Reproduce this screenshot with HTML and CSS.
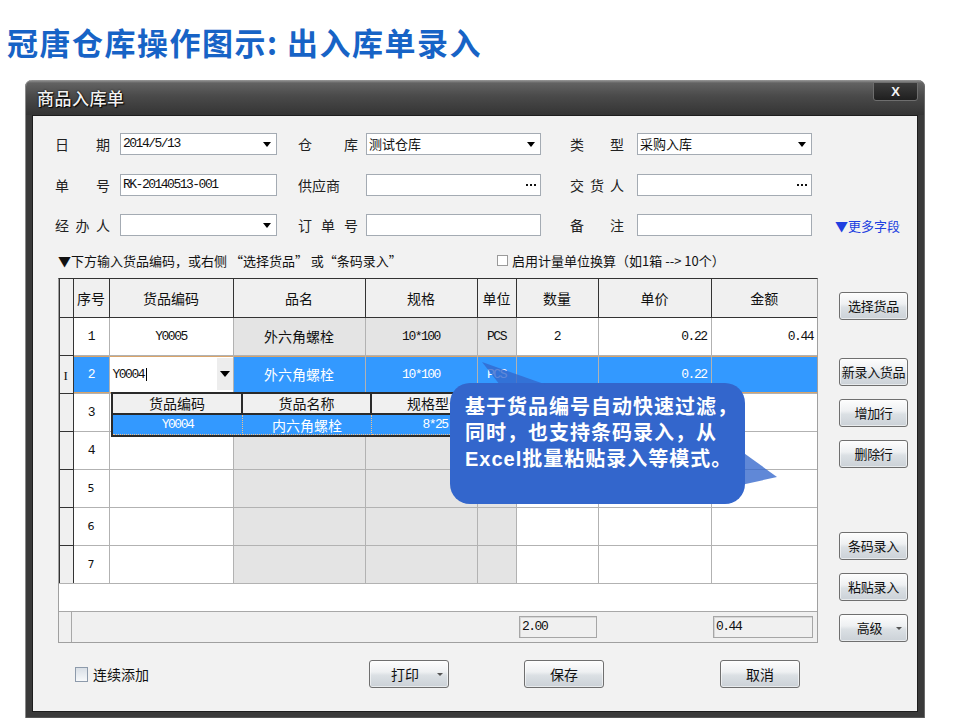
FILE: index.html
```html
<!DOCTYPE html>
<html lang="zh-CN">
<head>
<meta charset="utf-8">
<title>冠唐仓库操作图示: 出入库单录入</title>
<link rel="stylesheet" href="styles.css">
</head>
<body>
<h1 class="page-title">冠唐仓库操作图示: 出入库单录入</h1>
<div class="window">
  <div class="titlebar">
    <span class="win-title">商品入库单</span>
    <span class="close-btn">X</span>
  </div>
  <div class="client">
    <div class="form">
      <div class="lbl c1"><span>日</span><span>期</span></div>
      <div class="field"><span class="val mono">2014/5/13</span><i class="arrow"></i></div>
      <div class="lbl c3"><span>仓</span><span>库</span></div>
      <div class="field"><span class="val">测试仓库</span><i class="arrow"></i></div>
      <div class="lbl c5"><span>类</span><span>型</span></div>
      <div class="field"><span class="val">采购入库</span><i class="arrow"></i></div>
      <div></div>

      <div class="lbl c1"><span>单</span><span>号</span></div>
      <div class="field"><span class="val mono">RK-20140513-001</span></div>
      <div class="lbl c3 packed"><span>供应商</span></div>
      <div class="field"><span class="val"></span><i class="dots"></i></div>
      <div class="lbl c5"><span>交</span><span>货</span><span>人</span></div>
      <div class="field"><span class="val"></span><i class="dots"></i></div>
      <div></div>

      <div class="lbl c1"><span>经</span><span>办</span><span>人</span></div>
      <div class="field"><span class="val"></span><i class="arrow"></i></div>
      <div class="lbl c3"><span>订</span><span>单</span><span>号</span></div>
      <div class="field"><span class="val"></span></div>
      <div class="lbl c5"><span>备</span><span>注</span></div>
      <div class="field"><span class="val"></span></div>
      <div class="more">▼更多字段</div>
    </div>

    <div class="hint">
      <div class="hint-left">▼下方输入货品编码，或右侧 “选择货品” 或“条码录入”</div>
      <div class="hint-right"><i class="chk-small"></i>启用计量单位换算（如1箱 --&gt; 10个）</div>
    </div>

    <div class="main">
      <div class="table-wrap">
        <table class="grid">
          <colgroup>
            <col style="width:14px"><col style="width:36px"><col style="width:124px"><col style="width:132px"><col style="width:112px"><col style="width:39px"><col style="width:82px"><col style="width:113px"><col style="width:106px">
          </colgroup>
          <thead>
            <tr><th class="rh"></th><th>序号</th><th>货品编码</th><th>品名</th><th>规格</th><th>单位</th><th>数量</th><th>单价</th><th>金额</th></tr>
          </thead>
          <tbody>
            <tr><td class="rh"></td><td class="mono">1</td><td class="mono">Y0005</td><td class="g">外六角螺栓</td><td class="g mono">10*100</td><td class="g mono">PCS</td><td class="mono">2</td><td class="mono r">0.22</td><td class="mono r">0.44</td></tr>
            <tr class="sel"><td class="rh"><span class="ibeam">I</span></td><td class="mono">2</td><td class="edit"><div class="editor"><span class="mono">Y0004</span><span class="caret"></span><span class="dd-btn"><i class="arrow"></i></span></div></td><td>外六角螺栓</td><td class="mono">10*100</td><td class="mono">PCS</td><td></td><td class="mono r">0.22</td><td></td></tr>
            <tr><td class="rh"></td><td class="mono">3</td><td></td><td class="g"></td><td class="g"></td><td class="g"></td><td></td><td></td><td></td></tr>
            <tr><td class="rh"></td><td class="mono">4</td><td></td><td class="g"></td><td class="g"></td><td class="g"></td><td></td><td></td><td></td></tr>
            <tr><td class="rh"></td><td class="num">5</td><td></td><td class="g"></td><td class="g"></td><td class="g"></td><td></td><td></td><td></td></tr>
            <tr><td class="rh"></td><td class="num">6</td><td></td><td class="g"></td><td class="g"></td><td class="g"></td><td></td><td></td><td></td></tr>
            <tr><td class="rh"></td><td class="num">7</td><td></td><td class="g"></td><td class="g"></td><td class="g"></td><td></td><td></td><td></td></tr>
          </tbody>
        </table>
        <div class="blank"></div>
        <div class="footer">
          <div class="f-rh"></div>
          <div class="sum s-qty mono">2.00</div>
          <div class="sum s-amt mono">0.44</div>
        </div>

        <div class="dropdown">
          <div class="dd-head">货品编码</div>
          <div class="dd-head">货品名称</div>
          <div class="dd-head last">规格型号</div>
          <div class="dd-cell mono">Y0004</div>
          <div class="dd-cell">内六角螺栓</div>
          <div class="dd-cell mono last">8*25</div>
        </div>

        <div class="callout">基于货品编号自动快速过滤，<br>同时，也支持条码录入，从<br>Excel批量粘贴录入等模式。</div>
        <svg class="tails" width="758" height="363" viewBox="0 0 758 363">
          <polygon points="423,83 441,106 488,106"/>
          <polygon points="682,172 718,198 682,206"/>
        </svg>
      </div>

      <div class="side">
        <div class="btn sb-first">选择货品</div>
        <div class="btn sb-gap1">新录入货品</div>
        <div class="btn sb-next">增加行</div>
        <div class="btn sb-next">删除行</div>
        <div class="btn sb-gap2">条码录入</div>
        <div class="btn sb-next">粘贴录入</div>
        <div class="btn sb-next drop">高级<i class="mini-arrow"></i></div>
      </div>
    </div>

    <div class="bottom">
      <div class="chk-wrap"><i class="chk-big"></i><span>连续添加</span></div>
      <div class="btn bb drop">打印<i class="mini-arrow"></i></div>
      <div class="btn bb b-save">保存</div>
      <div class="btn bb b-cancel">取消</div>
    </div>
  </div>
</div>
</body>
</html>
```

FILE: styles.css
```css
* { box-sizing: border-box; }
html, body { margin: 0; padding: 0; background: #fff; }
body {
  width: 960px;
  height: 720px;
  overflow: hidden;
  font-family: "Noto Sans CJK SC", "Liberation Sans", sans-serif;
  color: #1a1a1a;
}

.page-title {
  margin: 0;
  padding: 22px 0 0 7px;
  height: 62px;
  font-size: 31px;
  line-height: 40px;
  font-weight: 700;
  color: #1763c6;
  letter-spacing: 1.5px;
  white-space: nowrap;
}

.window {
  width: 900px;
  height: 638px;
  margin: 18px 0 0 25px;
  padding: 0 7px 6px;
  border-radius: 7px 7px 0 0;
  background: linear-gradient(to bottom, #9a9a9a 0, #626262 3px, #4a4a4a 16px, #343434 35px, #3a3a3a 35px, #3a3a3a 100%);
  box-shadow: inset 1px 0 0 #8a8a8a, inset -1px 0 0 #6a6a6a, inset 0 -1px 0 #555;
  display: flex;
  flex-direction: column;
}

.titlebar {
  height: 35px;
  flex: none;
  display: flex;
  align-items: center;
  justify-content: space-between;
  padding-left: 5px;
}
.win-title {
  font-size: 17px;
  font-weight: 500;
  color: #f2f2f2;
  letter-spacing: 0.5px;
  text-shadow: 1px 1px 1px #000, 0 0 2px #000;
}
.close-btn {
  align-self: flex-start;
  margin-top: 2px;
  width: 45px;
  height: 19px;
  border: 1px solid #6e6e6e;
  border-radius: 0 0 3px 3px;
  background: linear-gradient(#3c3c3c, #1f1f1f);
  color: #f4f4f4;
  font: 700 13px/17px "Liberation Sans", sans-serif;
  text-align: center;
}

.client {
  height: 597px;
  flex: none;
  background: #f2f2f2;
  border: 1px solid #1e1e1e;
}

/* ---------- form ---------- */
.form {
  display: grid;
  padding: 17px 0 0 22px;
  grid-template-columns: 65px 157px 89px 175px 96px 175px 1fr;
  grid-template-rows: 22px 22px 22px;
  row-gap: 18.5px;
  align-items: center;
}
.lbl {
  display: flex;
  justify-content: space-between;
  font-size: 14px;
  line-height: 22px;
  color: #222;
}
.lbl.c1 { width: 55px; }
.lbl.c3 { width: 60px; margin-left: 21px; }
.lbl.c5 { width: 54px; margin-left: 29px; }
.lbl.packed { justify-content: flex-start; }

.field {
  height: 22px;
  background: #fff;
  border: 1px solid #a4abb3;
  display: flex;
  align-items: center;
  padding: 0 4px 0 2px;
}
.val {
  flex: 1;
  font-size: 13px;
  line-height: 20px;
  color: #111;
  white-space: nowrap;
}
.mono {
  font-family: "Liberation Mono", "Noto Sans CJK SC", monospace;
  font-size: 13px;
  letter-spacing: -1.5px;
}
.val.mono { font-size: 13px; }
.arrow {
  width: 0;
  height: 0;
  margin-right: 1px;
  border-left: 4px solid transparent;
  border-right: 4px solid transparent;
  border-top: 5px solid #000;
}
.dots {
  width: 10px;
  height: 2px;
  margin-right: 0;
  background: repeating-linear-gradient(to right, #111 0 2px, transparent 2px 4px);
}
.more {
  padding-left: 23px;
  font-size: 13px;
  color: #2040e0;
  white-space: nowrap;
}

/* ---------- hint ---------- */
.hint {
  display: flex;
  align-items: center;
  height: 20px;
  margin: 14px 0 0 25px;
  font-size: 13px;
  color: #111;
  white-space: nowrap;
}
.hint-left { width: 439px; }
.hint-right { display: flex; align-items: center; }
.chk-small {
  width: 11px;
  height: 11px;
  margin-right: 4px;
  background: #fff;
  border: 1px solid #9a9a9a;
}

/* ---------- main ---------- */
.main {
  display: flex;
  margin: 8px 0 0 25px;
}
.table-wrap {
  position: relative;
  width: 760px;
  height: 365px;
  flex: none;
  border: 1px solid #a0a0a0;
  border-top-color: #333;
  background: #fff;
  display: flex;
  flex-direction: column;
}
.grid {
  width: 758px;
  border-collapse: collapse;
  border-style: hidden;
  table-layout: fixed;
}
.grid tr { height: 38px; }
.grid th {
  background: #f0f0f0;
  border: 1px solid #333;
  font-weight: 400;
  font-size: 14px;
  color: #111;
  padding: 0;
}
.grid td {
  border: 1px solid #b2b2b2;
  padding: 0 4px;
  text-align: center;
  font-size: 14px;
  color: #111;
  white-space: nowrap;
}
.grid td.mono { font-size: 13px; }
.grid td.num { font-family: "DejaVu Sans", sans-serif; font-size: 11px; }
.grid .rh {
  background: #f0f0f0;
  border-color: #333;
  box-shadow: inset 1px 0 0 #333;
  padding: 0;
}
.grid td.g { background: #e4e4e4; }
.grid td.r { text-align: right; padding-right: 4px; }

.grid tr.sel td { background: #3399ff; color: #fff; box-shadow: inset 0 1px 0 #d9a46a, inset 0 -1px 0 #d9a46a; }
.grid tr.sel td.rh { background: #f0f0f0; color: #111; box-shadow: inset 1px 0 0 #333; }
.ibeam { font: 13px "Liberation Serif", serif; }
.grid tr.sel td.edit { background: #fff; padding: 0; color: #111; }
.editor {
  height: 36px;
  display: flex;
  align-items: center;
  padding-left: 3px;
}
.caret {
  width: 1px;
  height: 13px;
  margin-left: 2px;
  background: #000;
}
.dd-btn {
  margin-left: auto;
  width: 16px;
  height: 32px;
  background: #ededed;
  display: flex;
  align-items: center;
  justify-content: center;
}
.dd-btn .arrow { margin: 0; border-left-width: 5px; border-right-width: 5px; border-top-width: 6px; }

.blank { flex: 1; border-top: 1px solid #b2b2b2; }
.footer {
  height: 31px;
  flex: none;
  background: #f0f0f0;
  border-top: 1px solid #a8a8a8;
  display: grid;
  grid-template-columns: 13px 37px 125px 132px 112px 39px 82px 113px 1fr;
}
.f-rh { border-right: 1px solid #a8a8a8; }
.sum {
  height: 22px;
  margin-top: 4px;
  background: #f0f0f0;
  border: 1px solid #a6a6a6;
  box-shadow: inset 1px 1px 0 #d6d6d6;
  padding-left: 2px;
  line-height: 20px;
  color: #111;
}
.s-qty { grid-column: 7; margin-left: 2px; margin-right: 2px; }
.s-amt { grid-column: 9; margin-left: 1px; margin-right: 4px; }

/* dropdown list overlay */
.dropdown {
  position: absolute;
  left: 52px;
  top: 113px;
  width: 389px;
  display: grid;
  grid-template-columns: 130px 129px 1fr;
  grid-template-rows: 21px 20px;
  border: 2px solid #2a2a2a;
  background: #fff;
}
.dd-head {
  background: #f0f0f0;
  border-right: 2px solid #2a2a2a;
  border-bottom: 2px solid #2a2a2a;
  font-size: 14px;
  line-height: 19px;
  text-align: center;
  color: #111;
}
.dd-cell {
  background: #3399ff;
  color: #fff;
  font-size: 14px;
  line-height: 20px;
  text-align: center;
  border-right: 1px dotted #f3c08a;
  border-bottom: 1px dotted #f3c08a;
}
.dd-cell.mono { font-size: 13px; }
.dd-head.last, .dd-cell.last { border-right: none; }

/* callout */
.callout {
  position: absolute;
  left: 391px;
  top: 104px;
  width: 295px;
  height: 121px;
  border-radius: 20px;
  background: #3366cc;
  padding: 11px 0 0 15px;
  color: #fff;
  font-family: "Liberation Sans", "Noto Sans CJK SC", sans-serif;
  font-size: 20px;
  font-weight: 700;
  line-height: 26px;
  letter-spacing: 1px;
  white-space: nowrap;
}
.tails {
  position: absolute;
  left: 0;
  top: 0;
  overflow: visible;
  pointer-events: none;
}
.tails polygon { fill: #3366cc; opacity: 0.78; }

/* side buttons */
.side {
  width: 69px;
  margin-left: 21px;
  display: flex;
  flex-direction: column;
  flex: none;
}
.btn {
  height: 28px;
  border: 1px solid #6f6f6f;
  border-radius: 3px;
  background: linear-gradient(to bottom, #fdfdfd 0%, #eef0f2 42%, #dbe0e4 55%, #cbd1d7 100%);
  box-shadow: inset 0 0 0 1px rgba(255,255,255,0.55);
  font-size: 13px;
  line-height: 26px;
  text-align: center;
  color: #111;
  white-space: nowrap;
  position: relative;
}
.side .btn { letter-spacing: -0.3px; }
.sb-first { margin-top: 14px; }
.sb-gap1 { margin-top: 38px; }
.sb-next { margin-top: 13px; }
.sb-gap2 { margin-top: 64px; }
.btn.drop { padding-right: 8px; }
.mini-arrow {
  position: absolute;
  right: 5px;
  top: 12px;
  width: 0;
  height: 0;
  border-left: 3px solid transparent;
  border-right: 3px solid transparent;
  border-top: 3px solid #555;
}

/* bottom */
.bottom {
  display: flex;
  align-items: center;
  height: 28px;
  margin: 17px 0 0 42px;
}
.chk-wrap {
  width: 294px;
  display: flex;
  align-items: center;
  font-size: 14px;
  color: #111;
}
.chk-big {
  width: 13px;
  height: 15px;
  margin-right: 5px;
  border: 1px solid #8d9aab;
  background: linear-gradient(#d9dfe6, #f7f9fb);
}
.bb { width: 80px; font-size: 14px; }
.b-save { margin-left: 75px; }
.b-cancel { margin-left: 116px; }
```
